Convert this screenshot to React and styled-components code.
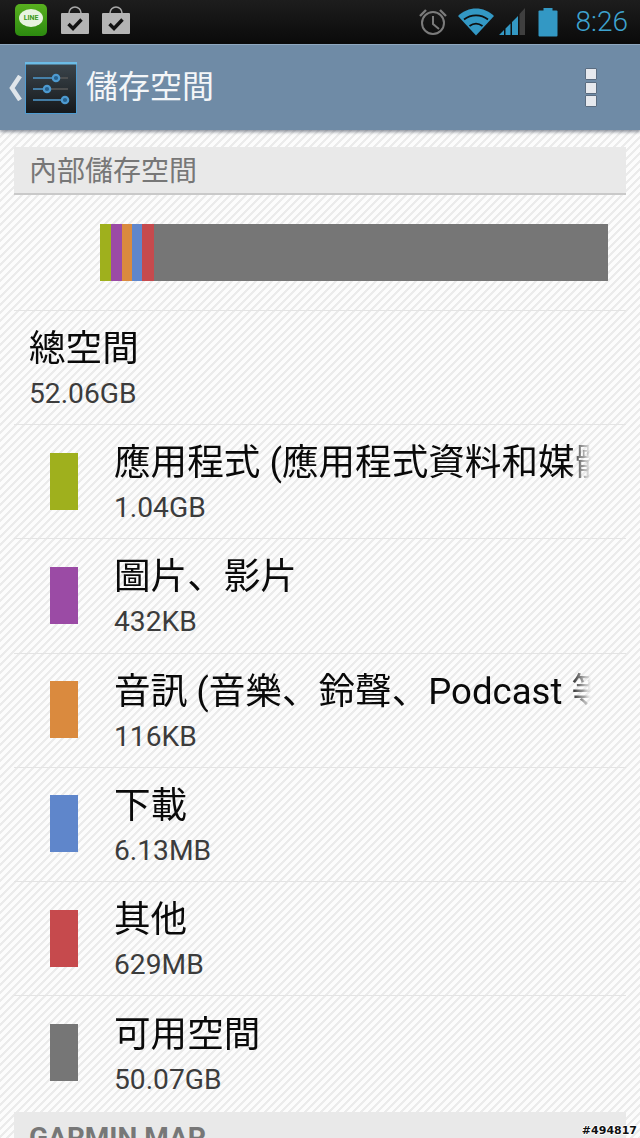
import React from "react";
import styled, { createGlobalStyle } from "styled-components";

const GlobalStyle = createGlobalStyle`
    html, body {
        margin: 0;
        padding: 0;
        background: #f7f7f7;
    }
    body {
        font-family: Roboto, "Noto Sans CJK JP", sans-serif;
    }
`

const Screen = styled.div`
    position: relative;
    width: 640px;
    height: 1138px;
    overflow: hidden;
    background-color: #fbfbfb;
    background-image: linear-gradient(
        135deg,
        #ebebeb 0%,
        #ebebeb 15%,
        #fcfcfc 19%,
        #fcfcfc 46%,
        #ebebeb 50%,
        #ebebeb 65%,
        #fcfcfc 69%,
        #fcfcfc 96%,
        #ebebeb 100%
    );
    background-size: 8px 8px;
`

const StatusBar = styled.div`
    height: 44px;
    display: flex;
    align-items: center;
    padding: 0 12px 0 15px;
    background: linear-gradient(#1d1d1d, #0a0a0a);
`

const StatusLeft = styled.div`
    display: flex;
    align-items: center;
    gap: 11px;
    flex: 1;
`

const StatusRight = styled.div`
    display: flex;
    align-items: center;
`

const StatusSlot = styled.div`
    display: flex;
    margin-left: ${props => props.$gap}px;
`

const Clock = styled.span`
    margin-left: 18px;
    font-size: 28px;
    font-weight: 300;
    color: #3ea3cf;
    line-height: 44px;
`

const LineBadge = styled.div`
    position: relative;
    width: 32px;
    height: 32px;
    margin-top: -5px;
    margin-right: 2px;
    border-radius: 5px;
    background: linear-gradient(#58b01f, #2c8a10);
    display: flex;
    align-items: center;
    justify-content: center;
`

const LineBubble = styled.div`
    width: 24px;
    height: 18px;
    margin-top: -4px;
    border-radius: 50%;
    background: #e8f3e0;
    color: #3b9a18;
    font-size: 7px;
    font-weight: 700;
    line-height: 18px;
    text-align: center;
`

const ActionBar = styled.div`
    position: relative;
    height: 85px;
    display: flex;
    align-items: center;
    padding: 0 43px 0 7px;
    background: #6f8ba6;
    border-top: 1px solid #8fa8bf;
    box-shadow: 0 2px 3px rgba(60, 70, 85, 0.55);
`

const Title = styled.div`
    flex: 1;
    margin-left: 9px;
    font-size: 32px;
    line-height: 85px;
    color: #f4f6f8;
`

const Dots = styled.div`
    display: flex;
    flex-direction: column;
    gap: 1.7px;
`

const Dot = styled.div`
    width: 12px;
    height: 12px;
    box-sizing: border-box;
    background: #e6e9ee;
    border: 1px solid #5a6c80;
    border-radius: 1px;
`

const Content = styled.div`
    padding: 17px 14px 0;
`

const SectionHeader = styled.div`
    height: 46px;
    padding-left: 15px;
    background: #e9e9e9;
    border-bottom: 2px solid #c9c9c9;
    color: #777;
    font-size: 28px;
    font-weight: ${props => props.$bold ? 700 : 400};
    line-height: ${props => props.$bold ? 52 : 49}px;
    white-space: nowrap;
    overflow: hidden;
`

const BarRow = styled.div`
    height: 116px;
    box-sizing: border-box;
    padding: 29px 18px 0 86px;
    border-bottom: 1px solid #e4e4e4;
`

const Bar = styled.div`
    height: 57px;
    display: flex;
`

const Segment = styled.div`
    width: ${props => props.$width}px;
    flex-grow: ${props => props.$grow || 0};
    background: ${props => props.$color};
`

const Row = styled.div`
    height: ${props => props.$last ? 116 : 114.2}px;
    box-sizing: border-box;
    display: flex;
    align-items: center;
    padding-left: ${props => props.$inset ? 36 : 15}px;
    padding-bottom: ${props => props.$last ? 2 : 0}px;
    border-bottom: ${props => props.$last ? "none" : "1px solid #e4e4e4"};
`

const Swatch = styled.div`
    width: 28px;
    height: 57px;
    margin: -1px 36px 0 0;
    flex-shrink: 0;
    background: ${props => props.$color};
`

const RowText = styled.div`
    min-width: 0;
    width: 477px;
    padding-top: 2px;
`

const RowTitle = styled.div`
    font-size: 36.6px;
    line-height: 46px;
    color: #0a0a0a;
    white-space: nowrap;
    overflow: hidden;
    -webkit-mask-image: linear-gradient(to right, #000 455px, transparent 477px);
    mask-image: linear-gradient(to right, #000 455px, transparent 477px);
`

const RowValue = styled.div`
    margin-top: 5px;
    font-size: 28.2px;
    line-height: 34px;
    color: #3c3c3c;
`

const Watermark = styled.div`
    position: absolute;
    right: 3px;
    bottom: 1px;
    font-family: "DejaVu Sans", sans-serif;
    font-size: 11px;
    font-weight: 700;
    line-height: 13px;
    color: #111;
    text-shadow: 1px 0 #fff, -1px 0 #fff, 0 1px #fff, 0 -1px #fff;
`

const BagIcon = () => (
    <svg width="30" height="32" viewBox="0 0 30 32">
        <path d="M9 12V7a6 6 0 0 1 12 0v5" fill="none" stroke="#a8a8a8" strokeWidth="1.6" />
        <rect x="1" y="7" width="28" height="21" rx="1" fill="#b4b4b4" />
        <path d="M8.5 18l4.5 4.5 8.5-9" fill="none" stroke="#111" strokeWidth="3.4" />
    </svg>
)

const AlarmIcon = () => (
    <svg width="30" height="30" viewBox="0 0 30 30">
        <circle cx="15" cy="16" r="11" fill="none" stroke="#7b7b7b" strokeWidth="2" />
        <path d="M15 9v8l6 5" fill="none" stroke="#7b7b7b" strokeWidth="2" />
        <path d="M2 9l6-6M28 9l-6-6" fill="none" stroke="#7b7b7b" strokeWidth="2.4" />
    </svg>
)

const WifiIcon = () => (
    <svg width="36" height="28" viewBox="0 0 36 28">
        <path d="M18 27.500L0 8C10 -2 26 -2 36 8z" fill="#3398c4" />
        <path d="M6 11.500c7-5.500 17-5.500 24 0" fill="none" stroke="#0f0f0f" strokeWidth="1.800" />
        <path d="M11.500 18c4-3 9-3 13 0" fill="none" stroke="#0f0f0f" strokeWidth="1.800" />
    </svg>
)

const SignalIcon = () => (
    <svg width="26" height="28" viewBox="0 0 26 28">
        <path d="M20.500 6L26 0V27H20.500z" fill="#3f3f3f" />
        <path d="M0 27l5-5v5zM6.500 27v-6.500l5-5V27zM13 27V14l6-6V27z" fill="#3398c4" />
    </svg>
)

const BatteryIcon = () => (
    <svg width="20" height="29" viewBox="0 0 20 29">
        <rect x="5.500" y="0" width="9" height="3" fill="#3398c4" />
        <rect x="0.500" y="2.500" width="19" height="26" rx="1" fill="#3398c4" />
    </svg>
)

const SettingsIcon = () => (
    <svg width="52" height="52" viewBox="0 0 52 52">
        <defs>
            <linearGradient id="tile" x1="0" y1="0" x2="0" y2="1">
                <stop offset="0" stopColor="#3c464d" />
                <stop offset="1" stopColor="#15181b" />
            </linearGradient>
        </defs>
        <rect x="0.500" y="0.500" width="51" height="51" fill="url(#tile)" stroke="#4f9bd0" />
        <rect x="0" y="0" width="52" height="2.500" fill="#6cbce6" />
        <g fill="none" strokeWidth="1.600">
            <path d="M8 16H31" stroke="#4d93c4" />
            <path d="M31 16H43" stroke="#555" />
            <path d="M8 27H22" stroke="#4d93c4" />
            <path d="M22 27H43" stroke="#555" />
            <path d="M8 38H40" stroke="#4d93c4" />
        </g>
        <g fill="#27618e" stroke="#4d9ad0" strokeWidth="2.200">
            <circle cx="31" cy="16" r="3.200" />
            <circle cx="22" cy="27" r="3.200" />
            <circle cx="40" cy="38" r="3.200" />
        </g>
    </svg>
)

const BackIcon = () => (
    <svg width="18" height="26" viewBox="0 0 14 26">
        <path d="M11 1L3 13l8 12" fill="none" stroke="#dfe5ea" strokeWidth="4.500" />
    </svg>
)

const segments = [
    { color: "#9fb01d", width: 11 },
    { color: "#9b4ba5", width: 11 },
    { color: "#da8a3e", width: 10 },
    { color: "#5f86cb", width: 10 },
    { color: "#c64a4d", width: 12 },
    { color: "#767676", width: 0, grow: 1 },
]

const rows = [
    { color: "#9fb01d", title: "應用程式 (應用程式資料和媒體內容)", value: "1.04GB" },
    { color: "#9b4ba5", title: "圖片、影片", value: "432KB" },
    { color: "#da8a3e", title: "音訊 (音樂、鈴聲、Podcast 等)", value: "116KB" },
    { color: "#5f86cb", title: "下載", value: "6.13MB" },
    { color: "#c64a4d", title: "其他", value: "629MB" },
    { color: "#767676", title: "可用空間", value: "50.07GB" },
]

const App = () => {
    return (
        <Screen>
            <GlobalStyle />
            <StatusBar>
                <StatusLeft>
                    <LineBadge><LineBubble>LINE</LineBubble></LineBadge>
                    <BagIcon />
                    <BagIcon />
                </StatusLeft>
                <StatusRight>
                    <StatusSlot $gap={0}><AlarmIcon /></StatusSlot>
                    <StatusSlot $gap={10}><WifiIcon /></StatusSlot>
                    <StatusSlot $gap={5}><SignalIcon /></StatusSlot>
                    <StatusSlot $gap={13}><BatteryIcon /></StatusSlot>
                    <Clock>8:26</Clock>
                </StatusRight>
            </StatusBar>
            <ActionBar>
                <BackIcon />
                <SettingsIcon />
                <Title>儲存空間</Title>
                <Dots>
                    <Dot />
                    <Dot />
                    <Dot />
                </Dots>
            </ActionBar>
            <Content>
                <SectionHeader>內部儲存空間</SectionHeader>
                <BarRow>
                    <Bar>
                        {segments.map(s => (
                            <Segment key={s.color} $color={s.color} $width={s.width} $grow={s.grow} />
                        ))}
                    </Bar>
                </BarRow>
                <Row>
                    <RowText>
                        <RowTitle>總空間</RowTitle>
                        <RowValue>52.06GB</RowValue>
                    </RowText>
                </Row>
                {rows.map((r, i) => (
                    <Row key={r.title} $inset $last={i === rows.length - 1}>
                        <Swatch $color={r.color} />
                        <RowText>
                            <RowTitle>{r.title}</RowTitle>
                            <RowValue>{r.value}</RowValue>
                        </RowText>
                    </Row>
                ))}
                <SectionHeader $bold>GARMIN MAP</SectionHeader>
            </Content>
            <Watermark>#494817</Watermark>
        </Screen>
    )
}

export default App
